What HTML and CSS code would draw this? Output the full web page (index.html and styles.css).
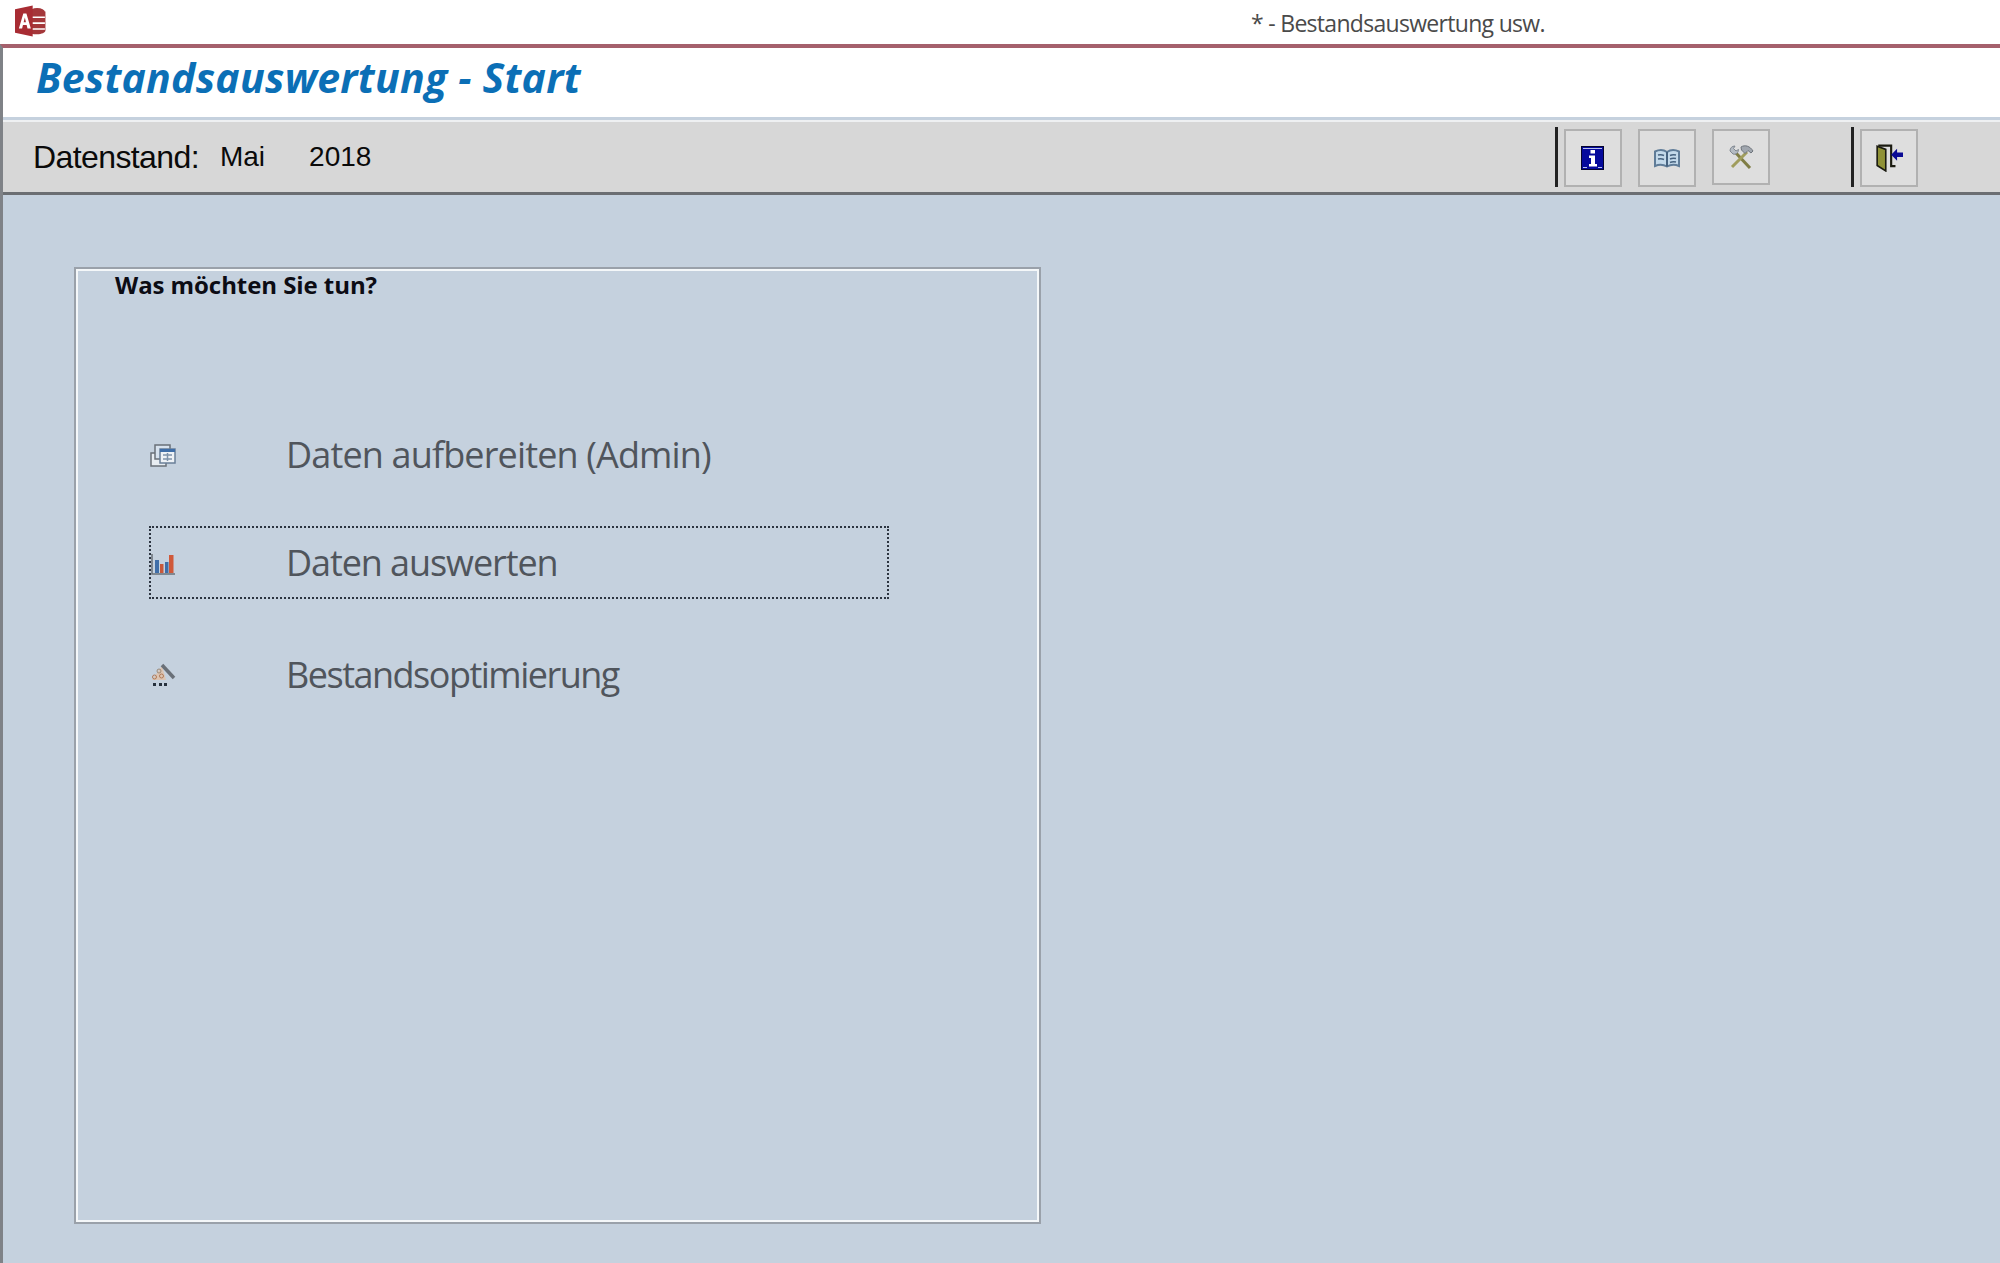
FILE: index.html
```html
<!DOCTYPE html>
<html lang="de">
<head>
<meta charset="utf-8">
<title>Bestandsauswertung</title>
<link rel="stylesheet" href="styles.css">
</head>
<body>
<div class="app">
  <header class="titlebar">
    <svg class="app-logo" viewBox="0 1 28 30" width="31" height="32" preserveAspectRatio="none">
      <ellipse cx="20" cy="7.500" rx="7" ry="3.600" fill="#a4373a"/>
      <path d="M13 7h14.500v18c0 2-3.500 3.500-7.500 3.500s-7-1-7-3z" fill="#a4373a"/>
      <path d="M15 12.500h12M15 18h12M15 23.500h12" stroke="#fff" stroke-width="1.600"/>
      <path d="M0 5 16 1.500v29L0 27z" fill="#a82c33"/>
      <path d="M3.500 23 7.500 9h2.800l4 14h-3l-.8-3.200H7.200L6.400 23zM7.800 17.200h2.100L8.900 12.800z" fill="#fff"/>
    </svg>
    <div class="window-title">* - Bestandsauswertung usw.</div>
  </header>

  <div class="client">
    <div class="form-header">
      <h1 class="form-title">Bestandsauswertung - Start</h1>
    </div>

    <div class="toolbar">
      <div class="stand">
        <span class="stand-label">Datenstand:</span>
        <span class="stand-month">Mai</span>
        <span class="stand-year">2018</span>
      </div>
      <div class="tools">
        <span class="sep"></span>
        <button class="tool" type="button" aria-label="Info">
          <svg viewBox="0 0 24 24" width="24" height="24">
            <rect x="0.500" y="0.500" width="22" height="23" fill="#050a9c" stroke="#05052c"/>
            <path d="M2 2.500h19M2 21.500h4M17 21.500h4" stroke="#b9c2ee" stroke-width="1"/>
            <rect x="9.500" y="4" width="4.500" height="3.500" fill="#fff"/>
            <path d="M8 9.500h6v8.500h2v2.500H8V18h2v-6H8z" fill="#fff"/>
          </svg>
        </button>
        <button class="tool" type="button" aria-label="Handbuch">
          <svg viewBox="0 0 26 22" width="26" height="22">
            <path d="M1 4.500C5 2.500 9.500 2.500 13 5c3.500-2.500 8-2.500 12-.5V19c-4-1.800-8.500-1.500-12 .5-3.500-2-8-2.300-12-.5z" fill="#c3d9ea" stroke="#5f7c98" stroke-width="2"/>
            <path d="M13 5v14.500" stroke="#46627f" stroke-width="2"/>
            <path d="M4 8c2-.5 4-.5 6 .5M4 12c2-.5 4-.5 6 .5M16 8.500c2-1 4-1 6-.5M16 12c2-1 4-1 6-.5M16 15.500c2-1 4-1 6-.5" stroke="#46627f" stroke-width="1.500" fill="none"/>
          </svg>
        </button>
        <button class="tool tool-short" type="button" aria-label="Werkzeuge">
          <svg viewBox="0 0 26 26" width="26" height="26">
            <path d="M7 8 22 24" stroke="#7f7d45" stroke-width="3"/>
            <path d="M19 8 4 23" stroke="#a09d5c" stroke-width="3"/>
            <path d="M2 7c0-3 2-5 5-5L5.500 4.500 8 7l2.500-1.500C10.500 8.500 8 11 5 10z" fill="#b4bbc3" stroke="#7f8790"/>
            <path d="M13 3c4-2.500 9-1 12 4l-2 2-3-2.500-3 3-3.500-3.500z" fill="#a0a6ae" stroke="#6f757c"/>
          </svg>
        </button>
        <span class="sep sep-second"></span>
        <button class="tool" type="button" aria-label="Beenden">
          <svg viewBox="0 0 26 26" width="28" height="28">
            <path d="M3 1.500h12v19h4" fill="none" stroke="#1a1a10" stroke-width="2"/>
            <path d="M2 2 10 5v20l-8-5z" fill="#8f9136" stroke="#1a1a10" stroke-width="1.500"/>
            <path d="M15 10 20.500 4.500v3.500H26v4h-5.500v3.500z" fill="#0a0a94"/>
          </svg>
        </button>
      </div>
    </div>

    <main class="canvas">
      <section class="frame">
        <h2 class="frame-title">Was möchten Sie tun?</h2>
        <ul class="menu">
          <li class="menu-item">
            <svg class="menu-icon" viewBox="0 0 26 26" width="26" height="26">
              <rect x="1" y="11" width="15" height="13" fill="#e8edf2" stroke="#6a7078" stroke-width="1.500"/>
              <rect x="5" y="3" width="15" height="14" fill="#d7e2ee" stroke="#6a7078" stroke-width="1.500"/>
              <rect x="10" y="7" width="15" height="14" fill="#eef2f6" stroke="#6a7f98" stroke-width="1.500"/>
              <rect x="10" y="7" width="15" height="3" fill="#3f6ea8"/>
              <path d="M13 13h9M13 17h9M17.500 11v8" stroke="#7f93aa" stroke-width="1.500"/>
            </svg>
            <span class="menu-label menu-label-first">Daten aufbereiten (Admin)</span>
          </li>
          <li class="menu-item menu-item-focus">
            <svg class="menu-icon" viewBox="0 0 26 26" width="26" height="26">
              <path d="M2 4v20h23" fill="none" stroke="#6a7078" stroke-width="1.500"/>
              <rect x="5" y="10" width="4" height="13" fill="#3f6ea8"/>
              <rect x="10" y="14" width="3.500" height="9" fill="#c9583a"/>
              <rect x="15" y="12" width="3.500" height="11" fill="#3f6ea8"/>
              <rect x="19" y="5" width="4.500" height="18" fill="#d0593a"/>
            </svg>
            <span class="menu-label menu-label-second">Daten auswerten</span>
          </li>
          <li class="menu-item">
            <svg class="menu-icon" viewBox="0 0 26 26" width="26" height="26">
              <path d="M12 4 2 18h14z" fill="#dcc4b2"/>
              <circle cx="9" cy="9" r="2" fill="none" stroke="#9c8a78"/>
              <circle cx="4.500" cy="15" r="2" fill="none" stroke="#b07a58"/>
              <circle cx="11.500" cy="14" r="2" fill="none" stroke="#b07a58"/>
              <path d="M12 3 24 16" stroke="#6a7078" stroke-width="3.500"/>
              <path d="M3 21h3v3H3zM9 21h3v3H9zM14 21h3v3h-3z" fill="#26303c"/>
            </svg>
            <span class="menu-label menu-label-third">Bestandsoptimierung</span>
          </li>
        </ul>
      </section>
    </main>
  </div>
</div>
</body>
</html>
```
FILE: styles.css
```css
* {
  box-sizing: border-box;
}

html,
body {
  margin: 0;
  height: 100%;
}

body {
  background: #c5d1de;
  overflow: hidden;
}

.app {
  height: 1263px;
  display: flex;
  flex-direction: column;
}

.titlebar {
  height: 44px;
  flex: none;
  background: #fff;
  display: flex;
  align-items: center;
  padding-left: 15px;
}

.app-logo {
  flex: none;
  margin-top: -2px;
}

.window-title {
  margin-left: 1205px;
  margin-top: 2px;
  font: 23px/28px "Open Sans", "Noto Sans", sans-serif;
  letter-spacing: -0.7px;
  color: #4a4a4a;
  white-space: nowrap;
}

.client {
  flex: 1;
  min-height: 0;
  display: flex;
  flex-direction: column;
  border-top: 4px solid #a5606c;
  border-left: 3px solid #7f8287;
}

.form-header {
  height: 72px;
  flex: none;
  background: #fff;
  border-bottom: 3px solid #c5d1de;
  display: flex;
  align-items: center;
  padding-left: 33px;
}

.form-title {
  margin: -11px 0 0;
  font: italic 700 41px/56px "Open Sans", "Noto Sans", sans-serif;
  letter-spacing: 0.25px;
  color: #0b6fb6;
  white-space: nowrap;
}

.toolbar {
  height: 75px;
  flex: none;
  background: #d7d7d7;
  border-top: 2px solid #eef0f2;
  border-bottom: 3px solid #6b6e72;
  display: flex;
  align-items: center;
  justify-content: space-between;
  padding: 0 82px 0 30px;
}

.stand {
  display: flex;
  align-items: center;
  color: #0a0a0a;
  font-family: "Liberation Sans", Arial, sans-serif;
  font-size: 28px;
  line-height: 36px;
}

.stand-label {
  font-size: 32px;
  letter-spacing: -0.6px;
}

.stand-month {
  margin-left: 21px;
}

.stand-year {
  margin-left: 44px;
}

.tools {
  display: flex;
  align-items: flex-start;
  padding-top: 2px;
}

.sep {
  width: 3px;
  height: 60px;
  background: #222;
  margin-right: 6px;
  margin-top: -2px;
}

.sep-second {
  margin-left: 81px;
  margin-right: 6px;
}

.tool {
  width: 58px;
  height: 58px;
  margin-right: 16px;
  padding: 0;
  background: #dedede;
  border: 2px solid #b1b1b1;
  display: flex;
  align-items: center;
  justify-content: center;
}

.tool:last-child {
  margin-right: 0;
}

.tool-short {
  height: 56px;
  margin-right: 0;
}

.canvas {
  flex: 1;
  min-height: 0;
  padding: 72px 0 0 71px;
}

.frame {
  width: 967px;
  height: 957px;
  border: 2px solid #9aa1aa;
  box-shadow: inset 2px 2px 0 #f4f7f9, inset -2px -2px 0 #f4f7f9;
  padding: 0 0 0 39px;
}

.frame-title {
  margin: 0;
  padding-top: 1px;
  font: 700 24px/30px "Open Sans", "Noto Sans", sans-serif;
  letter-spacing: -0.07px;
  color: #0c0c14;
}

.menu {
  list-style: none;
  margin: 119px 0 0 34px;
  padding: 0;
}

.menu-item {
  width: 740px;
  height: 72px;
  margin-bottom: 35px;
  display: flex;
  align-items: center;
  padding-left: 1px;
}

.menu-item-focus {
  height: 73px;
  outline: 2px dotted #2c3440;
  outline-offset: -2px;
  margin-bottom: 40px;
}

.menu-icon {
  flex: none;
}

.menu-label {
  margin-left: 110px;
  font: 36px/48px "Open Sans", "Noto Sans", sans-serif;
  color: #50555c;
  white-space: nowrap;
}

.menu-label-first {
  letter-spacing: -0.85px;
}

.menu-label-second {
  letter-spacing: -1.08px;
}

.menu-label-third {
  letter-spacing: -1.5px;
}
```
